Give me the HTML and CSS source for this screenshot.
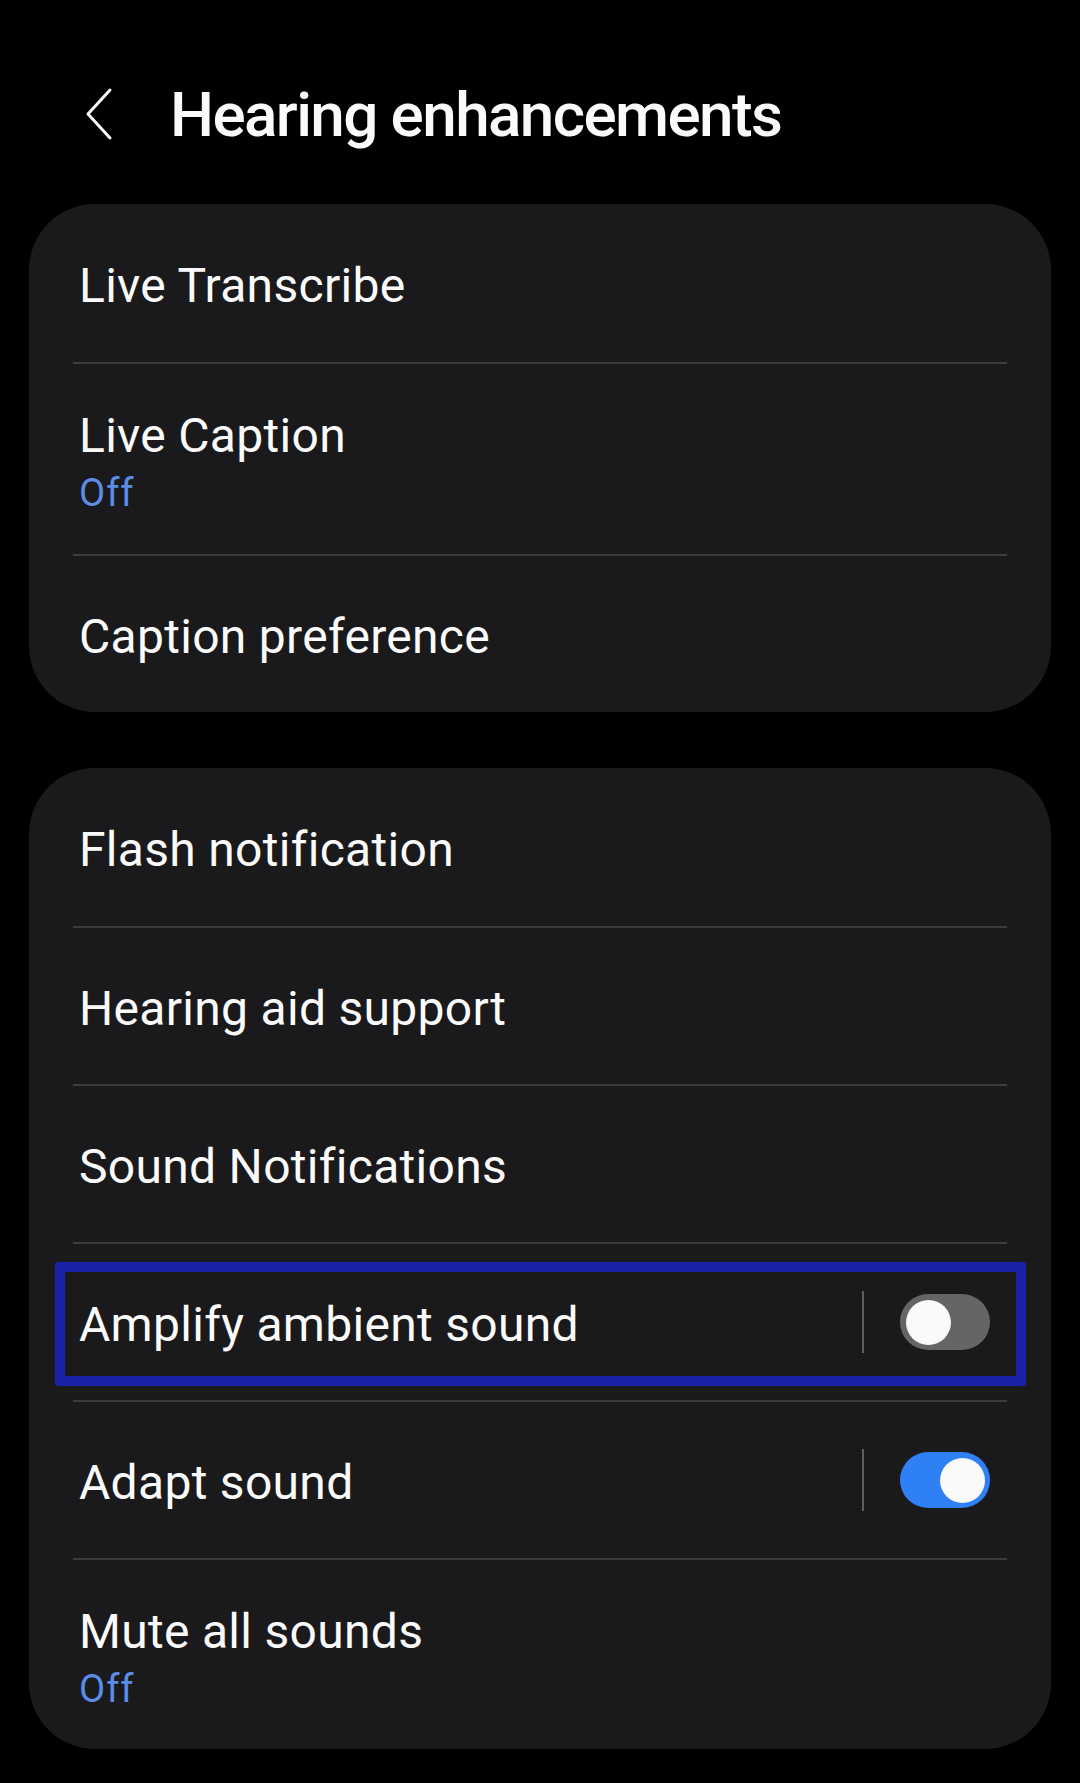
FILE: index.html
```html
<!DOCTYPE html>
<html lang="en">
<head>
    <meta charset="UTF-8">
    <meta name="viewport" content="width=device-width, initial-scale=1.0">
    <title>Hearing enhancements</title>
    <link rel="stylesheet" href="styles.css">
</head>
<body>
    <header class="top-bar">
        <button class="back-btn" type="button" aria-label="Back">
            <svg width="34" height="54" viewBox="0 0 34 54">
                <path d="M28 3 L6 27 L28 51" fill="none" stroke="#fafafa" stroke-width="3" stroke-linecap="round" stroke-linejoin="round"/>
            </svg>
        </button>
        <h1 class="page-title">Hearing enhancements</h1>
    </header>

    <main>
        <section class="card">
            <div class="row">
                <span class="row-title">Live Transcribe</span>
            </div>
            <div class="divider"></div>
            <div class="row row-tall">
                <span class="row-title">Live Caption</span>
                <span class="row-sub">Off</span>
            </div>
            <div class="divider"></div>
            <div class="row row-last">
                <span class="row-title">Caption preference</span>
            </div>
        </section>

        <section class="card">
            <div class="row">
                <span class="row-title">Flash notification</span>
            </div>
            <div class="divider"></div>
            <div class="row row-mid">
                <span class="row-title">Hearing aid support</span>
            </div>
            <div class="divider"></div>
            <div class="row row-mid">
                <span class="row-title">Sound Notifications</span>
            </div>
            <div class="divider"></div>
            <div class="row row-switch row-mid focused">
                <span class="row-title">Amplify ambient sound</span>
                <span class="switch-sep"></span>
                <span class="switch"><span class="knob"></span></span>
            </div>
            <div class="divider"></div>
            <div class="row row-switch row-mid">
                <span class="row-title">Adapt sound</span>
                <span class="switch-sep"></span>
                <span class="switch on"><span class="knob"></span></span>
            </div>
            <div class="divider"></div>
            <div class="row row-tall row-last">
                <span class="row-title">Mute all sounds</span>
                <span class="row-sub">Off</span>
            </div>
        </section>
    </main>
</body>
</html>
```

FILE: styles.css
```css
/* Page */
body {
    margin: 0;
    background-color: #000;
    color: #fafafa;
    font-family: Roboto, "Noto Sans", sans-serif;
    width: 1080px;
}

/* Header */
.top-bar {
    height: 204px;
    display: flex;
    align-items: center;
    padding: 24px 0 0 82px;
    box-sizing: border-box;
}
.back-btn {
    background: none;
    border: none;
    padding: 0;
    margin: 0 54px 0 0;
    display: flex;
}
.page-title {
    margin: 0;
    font-size: 62px;
    font-weight: 500;
    letter-spacing: -1.6px;
}

/* Cards */
main {
    padding: 0 29px;
    display: flex;
    flex-direction: column;
    gap: 56px;
}
.card {
    background-color: #1a1a1c;
    border-radius: 66px;
    display: flex;
    flex-direction: column;
}
.row {
    height: 158px;
    display: flex;
    flex-direction: column;
    justify-content: center;
    padding: 0 61px 0 50px;
    box-sizing: border-box;
}
.row-mid {
    height: 156px;
}
.row-tall {
    height: 190px;
    padding-top: 6px;
}
.row-last {
    height: 156px;
}
.row-tall.row-last {
    height: 189px;
}
.row-title {
    font-size: 48px;
    line-height: 56px;
    letter-spacing: 0.3px;
    padding-top: 5px;
}
.row-tall .row-title {
    padding-top: 0;
}
.row-sub {
    font-size: 38px;
    line-height: 46px;
    letter-spacing: 1px;
    margin-top: 6px;
    color: #5b8de6;
}
.divider {
    height: 2px;
    background-color: #3b3b3e;
    margin: 0 44px;
}

/* Switch rows */
.row-switch {
    flex-direction: row;
    align-items: center;
}
.row-switch .row-title {
    flex: 1;
}
.switch-sep {
    width: 2px;
    height: 62px;
    background-color: #5e5e61;
    margin-right: 36px;
}
.switch {
    width: 90px;
    height: 56px;
    border-radius: 28px;
    background-color: #656568;
    display: flex;
    align-items: center;
    padding: 0 6px;
    box-sizing: border-box;
}
.switch.on {
    background-color: #2f80f4;
    justify-content: flex-end;
    padding: 0 5px;
}
.knob {
    width: 45px;
    height: 45px;
    border-radius: 50%;
    background-color: #fafafa;
}

/* Accessibility focus highlight */
.focused {
    position: relative;
}
.focused::after {
    content: "";
    position: absolute;
    left: 26px;
    right: 25px;
    top: 18px;
    bottom: 14px;
    border: 10px solid #1c22a8;
    border-radius: 3px;
}
```
